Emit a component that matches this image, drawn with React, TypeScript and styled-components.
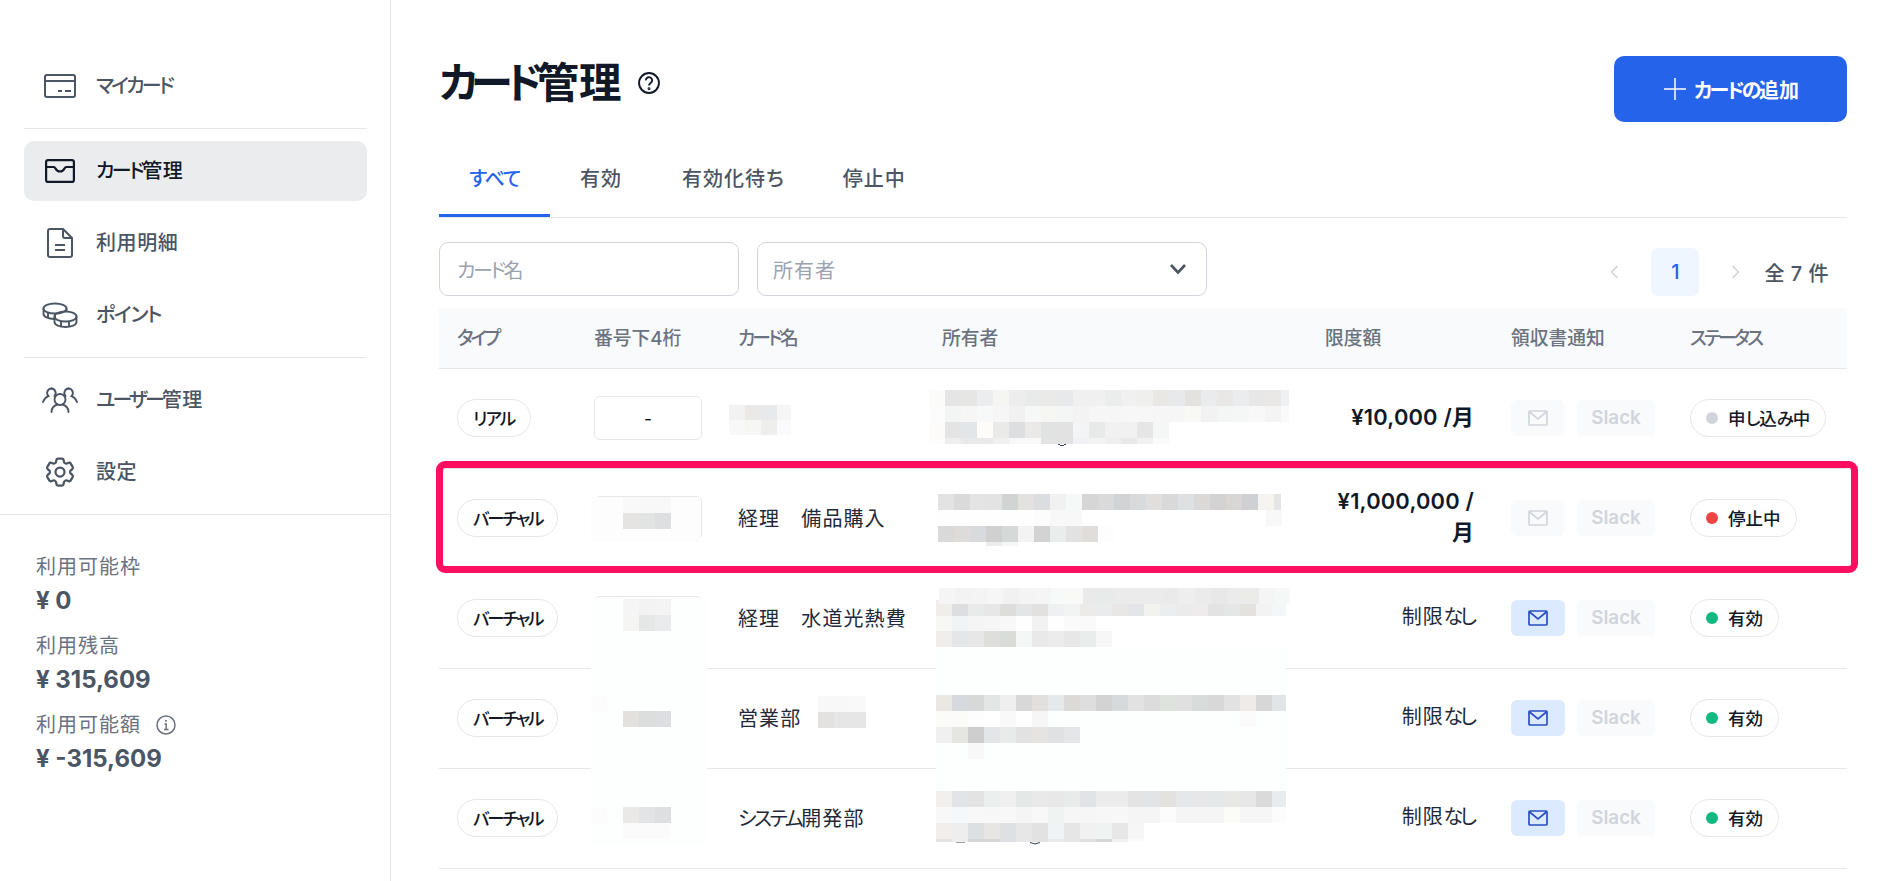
import React from "react";
import styled, { createGlobalStyle } from "styled-components";
import { HiOutlineCog6Tooth } from "react-icons/hi2";

const Global = createGlobalStyle`
  html, body { margin: 0; padding: 0; height: 100%; background: #fff; overflow: hidden; }
  #root { height: 100%; }
  * { box-sizing: border-box; }
  body {
    font-family: "Inter", "Noto Sans CJK JP", sans-serif;
    font-feature-settings: "palt";
    color: #111827;
  }
`;

const Page = styled.div`
  display: flex;
  width: 1894px;
  height: 881px;
  overflow: hidden;
`;

const Sidebar = styled.aside`
  width: 391px;
  flex: none;
  border-right: 1px solid #e5e7eb;
`;

const Nav = styled.nav`
  display: flex;
  flex-direction: column;
  gap: 12px;
  padding: 56px 23px 12px 24px;
  border-bottom: 1px solid #e5e7eb;
`;

const NavItem = styled.div<{ $active?: boolean }>`
  height: 60px;
  display: flex;
  align-items: center;
  border-radius: 10px;
  font-size: 20px;
  font-weight: 500;
  letter-spacing: 0.6px;
  background: ${(p) => (p.$active ? "#ebecee" : "transparent")};
  color: ${(p) => (p.$active ? "#111827" : "#4b5563")};
`;

const NavIcon = styled.span`
  width: 72px;
  flex: none;
  display: flex;
  justify-content: center;
`;

const NavLabel = styled.span`
  padding-bottom: 4px;
`;

const NavDivider = styled.div`
  height: 1px;
  background: #e5e7eb;
`;

const Stats = styled.div`
  padding: 37px 0 0 36px;
`;

const StatBlock = styled.div`
  margin-bottom: 12px;
`;

const StatLabel = styled.div`
  display: flex;
  align-items: center;
  gap: 15px;
  font-size: 20px;
  line-height: 30px;
  letter-spacing: 1px;
  color: #6b7280;
`;

const StatValue = styled.div`
  padding-top: 1px;
  font-size: 24px;
  line-height: 36px;
  font-weight: 700;
  color: #4b5563;
`;

const Main = styled.main`
  flex: 1;
  padding: 56px 47px 0 48px;
`;

const Header = styled.header`
  display: flex;
  justify-content: space-between;
  align-items: flex-start;
  height: 86px;
`;

const TitleWrap = styled.div`
  display: flex;
  align-items: center;
  gap: 17px;
  height: 54px;
`;

const Title = styled.h1`
  margin: 0;
  padding-bottom: 1px;
  font-size: 42.5px;
  line-height: 54px;
  font-weight: 700;
  color: #111827;
`;

const AddButton = styled.button`
  width: 233px;
  height: 66px;
  padding: 0 0 0 2px;
  border: 0;
  border-radius: 10px;
  background: #2563eb;
  color: #fff;
  font: inherit;
  font-size: 20px;
  font-weight: 700;
  display: flex;
  align-items: center;
  justify-content: center;
  gap: 8px;
`;

const Tabs = styled.div`
  display: flex;
  border-bottom: 1px solid #e5e7eb;
`;

const Tab = styled.div<{ $active?: boolean }>`
  height: 75px;
  padding: 0 30px 4px;
  display: flex;
  align-items: center;
  font-size: 20px;
  font-weight: 500;
  letter-spacing: 1px;
  color: ${(p) => (p.$active ? "#2563eb" : "#4b5563")};
  box-shadow: ${(p) => (p.$active ? "inset 0 -3px 0 #2563eb" : "none")};
`;

const Filters = styled.div`
  display: flex;
  gap: 18px;
  margin-top: 24px;
  margin-bottom: 12px;
  height: 54px;
`;

const Field = styled.div<{ $width: number; $pad: number }>`
  width: ${(p) => p.$width}px;
  height: 54px;
  padding: 0 19px 0 ${(p) => p.$pad}px;
  border: 1px solid #d1d5db;
  border-radius: 9px;
  display: flex;
  align-items: center;
  justify-content: space-between;
  font-size: 20px;
  letter-spacing: 1px;
  color: #9ca3af;
`;

const Pager = styled.div`
  margin-left: auto;
  align-self: flex-end;
  display: flex;
  align-items: center;
  padding-right: 18px;
  height: 48px;
`;

const PageArrow = styled.span<{ $w: number; $shift?: number }>`
  width: ${(p) => p.$w}px;
  padding-left: ${(p) => p.$shift ?? 0}px;
  display: flex;
  justify-content: center;
`;

const PageNumber = styled.div`
  width: 48px;
  height: 48px;
  border-radius: 7px;
  background: #eff6ff;
  color: #2563eb;
  font-size: 20px;
  font-weight: 500;
  display: flex;
  align-items: center;
  justify-content: center;
`;

const PageTotal = styled.div`
  font-size: 20px;
  font-weight: 500;
  letter-spacing: 0.5px;
  color: #4b5563;
  white-space: pre;
`;

const Grid = `
  display: grid;
  grid-template-columns: 155px 144px 204px 383px 186px 179px 157px;
`;

const HeadRow = styled.div`
  ${Grid}
  height: 61px;
  align-items: center;
  background: #f9fafb;
  border-bottom: 1px solid #e5e7eb;
  font-size: 18.75px;
  font-weight: 500;
  color: #6b7280;
  padding-bottom: 3px;
`;

const HeadCell = styled.div<{ $pad?: number }>`
  padding-left: ${(p) => p.$pad ?? 0}px;
`;

const Body = styled.div`
  position: relative;
`;

const Row = styled.div`
  ${Grid}
  height: 100px;
  padding-bottom: 1px;
  align-items: center;
  border-bottom: 1px solid #e5e7eb;
`;

const TypeCell = styled.div`
  padding-left: 18px;
`;

const Pill = styled.span`
  display: inline-flex;
  align-items: center;
  height: 38px;
  padding: 0 15px;
  border: 1px solid #e5e7eb;
  border-radius: 19px;
  background: #fff;
  font-size: 17.5px;
  font-weight: 500;
  color: #111827;
  white-space: nowrap;
`;

const PillText = styled.span`
  padding-bottom: 2px;
`;

const NumberBox = styled.div`
  width: 108px;
  height: 44px;
  border: 1px solid #e5e7eb;
  border-radius: 6px;
  display: flex;
  align-items: center;
  justify-content: center;
  font-size: 17.5px;
`;

const NameCell = styled.div`
  padding-bottom: 2px;
  font-size: 20px;
  letter-spacing: 1.1px;
  color: #1f2937;
  white-space: pre;
`;

const LimitCell = styled.div<{ $strong?: boolean }>`
  padding: 0 37px 2px 0;
  text-align: right;
  font-size: ${(p) => (p.$strong ? "21.875px" : "20px")};
  line-height: 31px;
  font-weight: ${(p) => (p.$strong ? 600 : 400)};
  letter-spacing: ${(p) => (p.$strong ? "0.2px" : "0.8px")};
  color: ${(p) => (p.$strong ? "#111827" : "#1f2937")};
`;

const NotifyCell = styled.div`
  display: flex;
  gap: 12px;
`;

const MailBadge = styled.div<{ $on?: boolean }>`
  width: 54px;
  height: 36px;
  border-radius: 6px;
  background: ${(p) => (p.$on ? "#dbeafe" : "#f9fafb")};
  color: ${(p) => (p.$on ? "#2b4fc0" : "#d1d5db")};
  display: flex;
  align-items: center;
  justify-content: center;
`;

const SlackBadge = styled.div`
  width: 78px;
  height: 36px;
  padding-bottom: 2px;
  border-radius: 6px;
  background: #f9fafb;
  color: #d1d5db;
  font-size: 18.75px;
  font-weight: 600;
  display: flex;
  align-items: center;
  justify-content: center;
`;

const StatusPill = styled(Pill)`
  gap: 10px;
`;

const Dot = styled.span<{ $color: string }>`
  width: 12px;
  height: 12px;
  border-radius: 50%;
  background: ${(p) => p.$color};
`;

const Kana = styled.span<{ $k: string }>`
  letter-spacing: ${(p) => p.$k};
`;

function T({ children, k = "-0.12em", h = "-0.05em" }: { children: string; k?: string; h?: string }) {
  return (
    <>
      {children.split(/([ァ-ヶー]+|[ぁ-ん]+)/).map((part, i) => {
        if (!part) return null;
        if (/^[ァ-ヶー]/.test(part)) return <Kana key={i} $k={k}>{part}</Kana>;
        if (/^[ぁ-ん]/.test(part)) return <Kana key={i} $k={h}>{part}</Kana>;
        return <React.Fragment key={i}>{part}</React.Fragment>;
      })}
    </>
  );
}

const MosaicLayer = styled.svg`
  position: absolute;
  left: 0;
  top: 0;
  pointer-events: none;
`;

const Highlight = styled.div`
  position: absolute;
  left: -3px;
  top: 92px;
  width: 1422px;
  height: 112px;
  border: 7px solid #ff0f5f;
  border-radius: 9px;
  pointer-events: none;
`;

type Cells = [number, number, number, number, string];

const masks: [number, number, number, number, string][] = [
  [591, 497, 109, 45, "#fdfdfd"],
  [591, 598, 116, 247, "#fdfefe"],
  [936, 647, 350, 145, "#fdfefe"],
];

const cells: Cells[] = [
  [929, 390, 1289, 16, "fbfbf9 e5e5e5 e6e6e5 ebedef f5f5f2 ededed e9ebea eaeae8 e8e9eb f0f0f0 f0f0f0 ebecec f0f0f0 efefed e9e8e5 e8e9eb e3e2df eaebed e9e8e6 ebecee e7e7e7 e9e8e6 eff0f2"],
  [929, 406, 1289, 16, "fcfcfc f3f5f5 f6f6f6 f7f9f9 f5f6f5 f1f1f1 f6f8f8 f6f6f3 f4f6f5 f3f3f3 f6f6f6 f6f6f6 f7f7f7 f7f7f7 f6f6f6 f6f6f6 f8f8f5 f2f2f2 f4f6f5 f5f6f6 f8f8f8 f4f4f4 fafafa"],
  [929, 422, 1169, 16, "fcfbf9 e4e4e4 e2e6e8 fdfcf9 eaeae8 dcdee0 ebe9e7 e1e3e3 e2e2e2 f3f4f6 e8eaea f1f1f2 f1f1f2 e6e6e7 f5f7f7"],
  [929, 438, 1169, 6, "fdfcfa eeeeee e8e9eb eaeaea f1f0ee f7f8fa f8f8f8 e2e3e3 e2e2e2 f0f1f4 f3f3f5 eeeeef e8e8eb f0f1f3 f9fafa"],
  [938, 494, 1281, 16, "e3e3e3 dadada e4e4e4 e3e3e3 d2d4d3 e4e2e0 dcdde0 f1f1f1 f7f8f8 d6d6d6 dadada d2d3d5 d9dadc e0dfdd d9d9d9 dfe0e2 dbd9d7 d2d3d2 d9d7d5 cfd0d3 f5f4f1 e5e5e8"],
  [938, 510, 1274, 16, "fefefe fefefe fefefe fefefe fefefe fefefe fcfcfc f8f8f8 f8f8f8"],
  [1266, 510, 1282, 16, "f8f8f8"],
  [938, 526, 1122, 16, "d9d9d9 dddcda d9dade d0d0d0 d7d9d8 f3f3f3 d3d3d3 ebecec e2e2e2 dfdedc fdfdfe"],
  [986, 542, 1018, 4, "ececec f5f6f6"],
  [936, 600, 1286, 16, "efeeea dcdee0 e9ebea e6e7e6 dddddb e4e5e7 e2e1df eef0f1 f2f3f3 ecebe9 e9ebed e8e7e5 e3e5e8 f2f2ef ebedee ebebeb edebeb e2e3e2 e5e7e7 e3e2df f3f3f3 f5f6f8"],
  [939, 588, 1290, 16, "f5f5f5 f3f3f3 f4f4f4 f6f6f6 f1f1f1 f4f4f4 f5f5f5 f8f9f9 f9f9f7 eaeaea e9ebea ebebeb ebebeb ebebeb eaeaea eeeeee ebebeb e8e8e8 ebebeb ebebe9 f5f5f5 f6f8f8"],
  [936, 616, 1096, 15, "f7f7f5 f1f3f5 f5f5f5 f6f6f6 f8f8f8 fdfefd f2f2f2 fefefe fafafa fafafa"],
  [936, 631, 1112, 16, "efeeec e5e6e8 e7e7e7 dededc dadcda f5f7f7 e9e9e9 ececec e7e7e7 ebeded f7f7f7"],
  [936, 695, 1286, 16, "ebe7e3 d6dade d7d8d8 e4e6e5 efefef d8d8d8 e2e0de e5e9ec dcdad7 dedede d4d3d3 d7dadd e2e2e2 dcdcdc e0e2e0 e0e0e0 d9dcdb d7d8d7 e2e2e2 eeecea d7d7d7 e3e4e6"],
  [936, 711, 1048, 16, "fbfbf9 fbfbf9 fdfdfd ffffff f9f9f9 ffffff f6f6f6"],
  [1240, 711, 1256, 16, "fbfbfb"],
  [936, 727, 1080, 16, "f0f0f0 e5e5e3 cecece e3e5e8 e9ebea e2e2e2 e5e4e2 e0e1e3 e5e6e8"],
  [968, 743, 984, 16, "f8f8f8"],
  [936, 791, 1286, 16, "f1f0ee e2e4e7 e3e3e3 edefee f0f0f0 e5e8e7 e9e9e9 e8e8e8 e9ebea e2e3e6 ebebeb ebebeb e4e4e4 e3e4e6 e4e2df e6e7ea e7e7e9 e6e7e9 e8e8e6 e7e7e7 dadada e8eced"],
  [936, 807, 1286, 16, "f8f8f8 f6f7f9 f8f8f8 f7f7f7 f8f8f8 f5f5f5 f8f8f8 f1f3f3 f6f6f6 f6f6f6 f7f7f7 f7f7f7 f5f5f5 f5f5f5 fcfcfc f5f5f5 f5f5f5 f5f5f5 fbfbf9 f6f6f6 f6f6f6 fcfcfc"],
  [936, 823, 1144, 16, "f1efed eeeeee dde0e2 e8e6e3 dee0e3 e7e7e7 e2e2e2 f0f2f4 e6e6e6 f1f1f1 f1f3f3 e7e7e7 f6f6f6"],
  [936, 839, 1144, 3, "e4e2e4 eeeeee d4d5d7 d7d7d7 dee0e3 e7e7e7 e2e2e2 e8eaec e6e6e6 e1e1e1 d6d6d6 f1f1f1 fafafa"],
  [729, 405, 791, 15, "f2f2f2 ebe9e7 e8e9eb f6f6f6"],
  [729, 420, 791, 15, "f8f8f8 f6f6f5 eeeeec fafafc"],
  [623, 497, 671, 16, "f9f9f9 f8f8f8 f8f8f8"],
  [623, 513, 671, 16, "e6e4e2 e2e3e3 dedfe1"],
  [623, 599, 671, 16, "f5f5f5 f3f3f3 f4f4f4"],
  [623, 615, 671, 16, "f5f5f3 e5e7e7 e9ebed"],
  [591, 695, 607, 16, "fcfcfc"],
  [623, 711, 671, 16, "e3e0dd dcdedd dcdee2"],
  [591, 807, 607, 16, "fcfcfc"],
  [623, 807, 671, 16, "ebe9e7 e3e4e6 dedfe1"],
  [623, 823, 671, 16, "fbfbfb fbfbfb fbfbfb"],
  [818, 696, 866, 16, "f8f8f8 f8f8f8 f9f9f9"],
  [818, 712, 866, 16, "e4e2e0 e6e6e6 e6e6e6"],
];

function Mosaic() {
  return (
    <MosaicLayer width={1408} height={500} viewBox="439 369 1408 500" shapeRendering="crispEdges">
      {masks.map(([x, y, w, h, c], i) => (
        <rect key={`m${i}`} x={x} y={y} width={w} height={h} fill={c} />
      ))}
      {cells.flatMap(([x, y, end, h, colors], i) =>
        colors.split(" ").map((c, j) => {
          const cx = x + j * 16;
          return <rect key={`${i}-${j}`} x={cx} y={y} width={Math.min(16, end - cx)} height={h} fill={`#${c}`} />;
        })
      )}
      <path d="M1058 444.5q4 1.5 8 0" stroke="#374151" fill="none" />
      <path d="M1030 842.5q5 3 10 0" stroke="#374151" fill="none" shapeRendering="auto" />
      <rect x={956} y={842} width={9} height={1} fill="#9ca3af" />
    </MosaicLayer>
  );
}

const IconSvg = styled.svg`
  display: block;
  fill: none;
  stroke: currentColor;
`;

const CardIcon = () => (
  <IconSvg width={32} height={24} viewBox="0 0 32 24" strokeWidth={2}>
    <rect x="1" y="1" width="30" height="22" rx="2" />
    <path d="M1 7h30" />
    <path d="M14 17h4M21 17h6" />
  </IconSvg>
);
const WalletIcon = () => (
  <IconSvg width={30} height={24} viewBox="0 0 30 24" strokeWidth={2.2}>
    <rect x="1.1" y="1.1" width="27.8" height="21.8" rx="2" />
    <path d="M1 8h8c1.5 0 1.5 4.5 6 4.5S19.5 8 21 8h8" />
  </IconSvg>
);
const DocIcon = () => (
  <IconSvg width={26} height={30} viewBox="0 0 26 30" strokeWidth={2}>
    <path d="M3 1h13l9 9v17a2 2 0 0 1-2 2H3a2 2 0 0 1-2-2V3a2 2 0 0 1 2-2z" />
    <path d="M16 1v7a2 2 0 0 0 2 2h7" />
    <path d="M8 17h10M8 22h10" />
  </IconSvg>
);
const CoinsIcon = () => (
  <IconSvg width={36} height={26} viewBox="0 0 36 26" strokeWidth={1.9}>
    <ellipse cx="13" cy="6.5" rx="11.5" ry="5" />
    <path d="M1.5 6.5v5.5c0 2.6 4.5 5 10.5 5" />
    <path d="M24.5 6.5v3" />
    <path d="M6 11v5M13 11.5v5" />
    <ellipse cx="23.5" cy="14.5" rx="11" ry="5" />
    <path d="M12.5 14.5v5.5c0 3 5 5 11 5s11-2 11-5v-5.5" />
    <path d="M19 19.5v5M27 19.5v5" />
  </IconSvg>
);
const UsersIcon = () => (
  <IconSvg width={36} height={26} viewBox="0 0 36 26" strokeWidth={1.9} strokeLinecap="round">
    <circle cx="18" cy="12.5" r="5.5" />
    <path d="M9.500 25c0-4 3-6.500 6-7.500M26.500 25c0-4-3-6.500-6-7.500" />
    <path d="M9.500 1.500a4.500 4.500 0 0 1 3 7.500M26.500 1.500a4.500 4.500 0 0 0-3 7.500" />
    <path d="M9.500 1.500a4.500 4.500 0 0 0-3 7.700c-2.500 1-4.500 3-5.500 5.800M26.500 1.500a4.500 4.500 0 0 1 3 7.700c2.500 1 4.500 3 5.500 5.800" />
  </IconSvg>
);
const HelpIcon = () => (
  <IconSvg width={22} height={22} viewBox="0 0 21 21" strokeWidth={1.8}>
    <circle cx="10.500" cy="10.500" r="9.500" />
    <path d="M7.500 8a3 3 0 1 1 4.600 2.500c-1 .7-1.600 1.200-1.600 2.500" />
    <circle cx="10.500" cy="16" r="0.500" />
  </IconSvg>
);
const InfoIcon = () => (
  <IconSvg width={20} height={20} viewBox="0 0 20 20" strokeWidth={1.500}>
    <circle cx="10" cy="10" r="9" />
    <path d="M8.500 9h1.700v5.500M8 14.500h4.500" />
    <circle cx="10" cy="5.800" r="0.400" />
  </IconSvg>
);
const MailIcon = () => (
  <IconSvg width={20} height={16} viewBox="0 0 20 16" strokeWidth={1.700}>
    <rect x="1" y="1" width="18" height="14" rx="1" />
    <path d="M1 1.500l9 7.500 9-7.500" />
  </IconSvg>
);
const PlusIcon = () => (
  <IconSvg width={22} height={22} viewBox="0 0 22 22" strokeWidth={1.500}>
    <path d="M11 0v22M0 11h22" />
  </IconSvg>
);
const ChevronDown = () => (
  <IconSvg width={18} height={12} viewBox="0 0 18 12" strokeWidth={2.600} style={{ color: "#4b5563" }}>
    <path d="M2 2l7 7.500L16 2" />
  </IconSvg>
);
const PagerChevron = ({ flip }: { flip?: boolean }) => (
  <IconSvg width={9} height={14} viewBox="0 0 9 14" strokeWidth={1.600} style={{ color: "#d1d5db" }}>
    <path d={flip ? "M1.500 1l6 6-6 6" : "M7.500 1l-6 6 6 6"} />
  </IconSvg>
);

const nav = [
  { label: "マイカード", k: "-0.135em", icon: <CardIcon /> },
  { divider: true },
  { label: "カード管理", k: "-0.13em", icon: <WalletIcon />, active: true },
  { label: "利用明細", icon: <DocIcon /> },
  { label: "ポイント", k: "-0.06em", icon: <CoinsIcon /> },
  { divider: true },
  { label: "ユーザー管理", k: "-0.15em", icon: <UsersIcon /> },
  { label: "設定", icon: <HiOutlineCog6Tooth size={36} style={{ display: "block" }} /> },
];

const heads: [string, number?][] = [
  ["タイプ", 18],
  ["番号下4桁"],
  ["カード名"],
  ["所有者"],
  ["限度額"],
  ["領収書通知"],
  ["ステータス"],
];

const rows = [
  { type: "リアル", k: "-0.1em", number: "-", name: "", limit: "¥10,000 /月", strong: true, mail: false, status: "申し込み中", dot: "#d1d5db" },
  { type: "バーチャル", k: "-0.125em", number: "", name: "経理　備品購入", limit: "¥1,000,000 /月", strong: true, mail: false, status: "停止中", dot: "#ef4444" },
  { type: "バーチャル", k: "-0.125em", number: "", name: "経理　水道光熱費", limit: "制限なし", mail: true, status: "有効", dot: "#10b981" },
  { type: "バーチャル", k: "-0.125em", number: "", name: "営業部", limit: "制限なし", mail: true, status: "有効", dot: "#10b981" },
  { type: "バーチャル", k: "-0.125em", number: "", name: "システム開発部", limit: "制限なし", mail: true, status: "有効", dot: "#10b981" },
];

export default function App() {
  return (
    <Page>
      <Global />
      <Sidebar>
        <Nav>
          {nav.map((item, i) =>
            item.divider ? (
              <NavDivider key={i} />
            ) : (
              <NavItem key={i} $active={item.active}>
                <NavIcon>{item.icon}</NavIcon>
                <NavLabel><T k={item.k}>{item.label as string}</T></NavLabel>
              </NavItem>
            )
          )}
        </Nav>
        <Stats>
          <StatBlock>
            <StatLabel>利用可能枠</StatLabel>
            <StatValue>¥ 0</StatValue>
          </StatBlock>
          <StatBlock>
            <StatLabel>利用残高</StatLabel>
            <StatValue>¥ 315,609</StatValue>
          </StatBlock>
          <StatBlock>
            <StatLabel>
              利用可能額
              <InfoIcon />
            </StatLabel>
            <StatValue>¥ -315,609</StatValue>
          </StatBlock>
        </Stats>
      </Sidebar>
      <Main>
        <Header>
          <TitleWrap>
            <Title><T k="-0.16em">カード管理</T></Title>
            <HelpIcon />
          </TitleWrap>
          <AddButton>
            <PlusIcon />
            <span><T k="-0.125em" h="-0.125em">カードの追加</T></span>
          </AddButton>
        </Header>
        <Tabs>
          <Tab $active><T h="-0.06em">すべて</T></Tab>
          <Tab>有効</Tab>
          <Tab><T>有効化待ち</T></Tab>
          <Tab>停止中</Tab>
        </Tabs>
        <Filters>
          <Field $width={300} $pad={17}><span><T k="-0.125em">カード名</T></span></Field>
          <Field $width={450} $pad={15}>
            所有者
            <ChevronDown />
          </Field>
          <Pager>
            <PageArrow $w={74}><PagerChevron /></PageArrow>
            <PageNumber>1</PageNumber>
            <PageArrow $w={65} $shift={8}><PagerChevron flip /></PageArrow>
            <PageTotal>全 7 件</PageTotal>
          </Pager>
        </Filters>
        <HeadRow>
          {heads.map(([h, pad]) => (
            <HeadCell key={h} $pad={pad}><T k="-0.155em">{h}</T></HeadCell>
          ))}
        </HeadRow>
        <Body>
          {rows.map((r, i) => (
            <Row key={i}>
              <TypeCell><Pill><PillText><T k={r.k}>{r.type}</T></PillText></Pill></TypeCell>
              <NumberBox>{r.number}</NumberBox>
              <NameCell><T>{r.name}</T></NameCell>
              <div />
              <LimitCell $strong={r.strong}><T h="-0.15em">{r.limit}</T></LimitCell>
              <NotifyCell>
                <MailBadge $on={r.mail}><MailIcon /></MailBadge>
                <SlackBadge>Slack</SlackBadge>
              </NotifyCell>
              <div>
                <StatusPill>
                  <Dot $color={r.dot} />
                  <PillText><T h="-0.06em">{r.status}</T></PillText>
                </StatusPill>
              </div>
            </Row>
          ))}
          <Mosaic />
          <Highlight />
        </Body>
      </Main>
    </Page>
  );
}
